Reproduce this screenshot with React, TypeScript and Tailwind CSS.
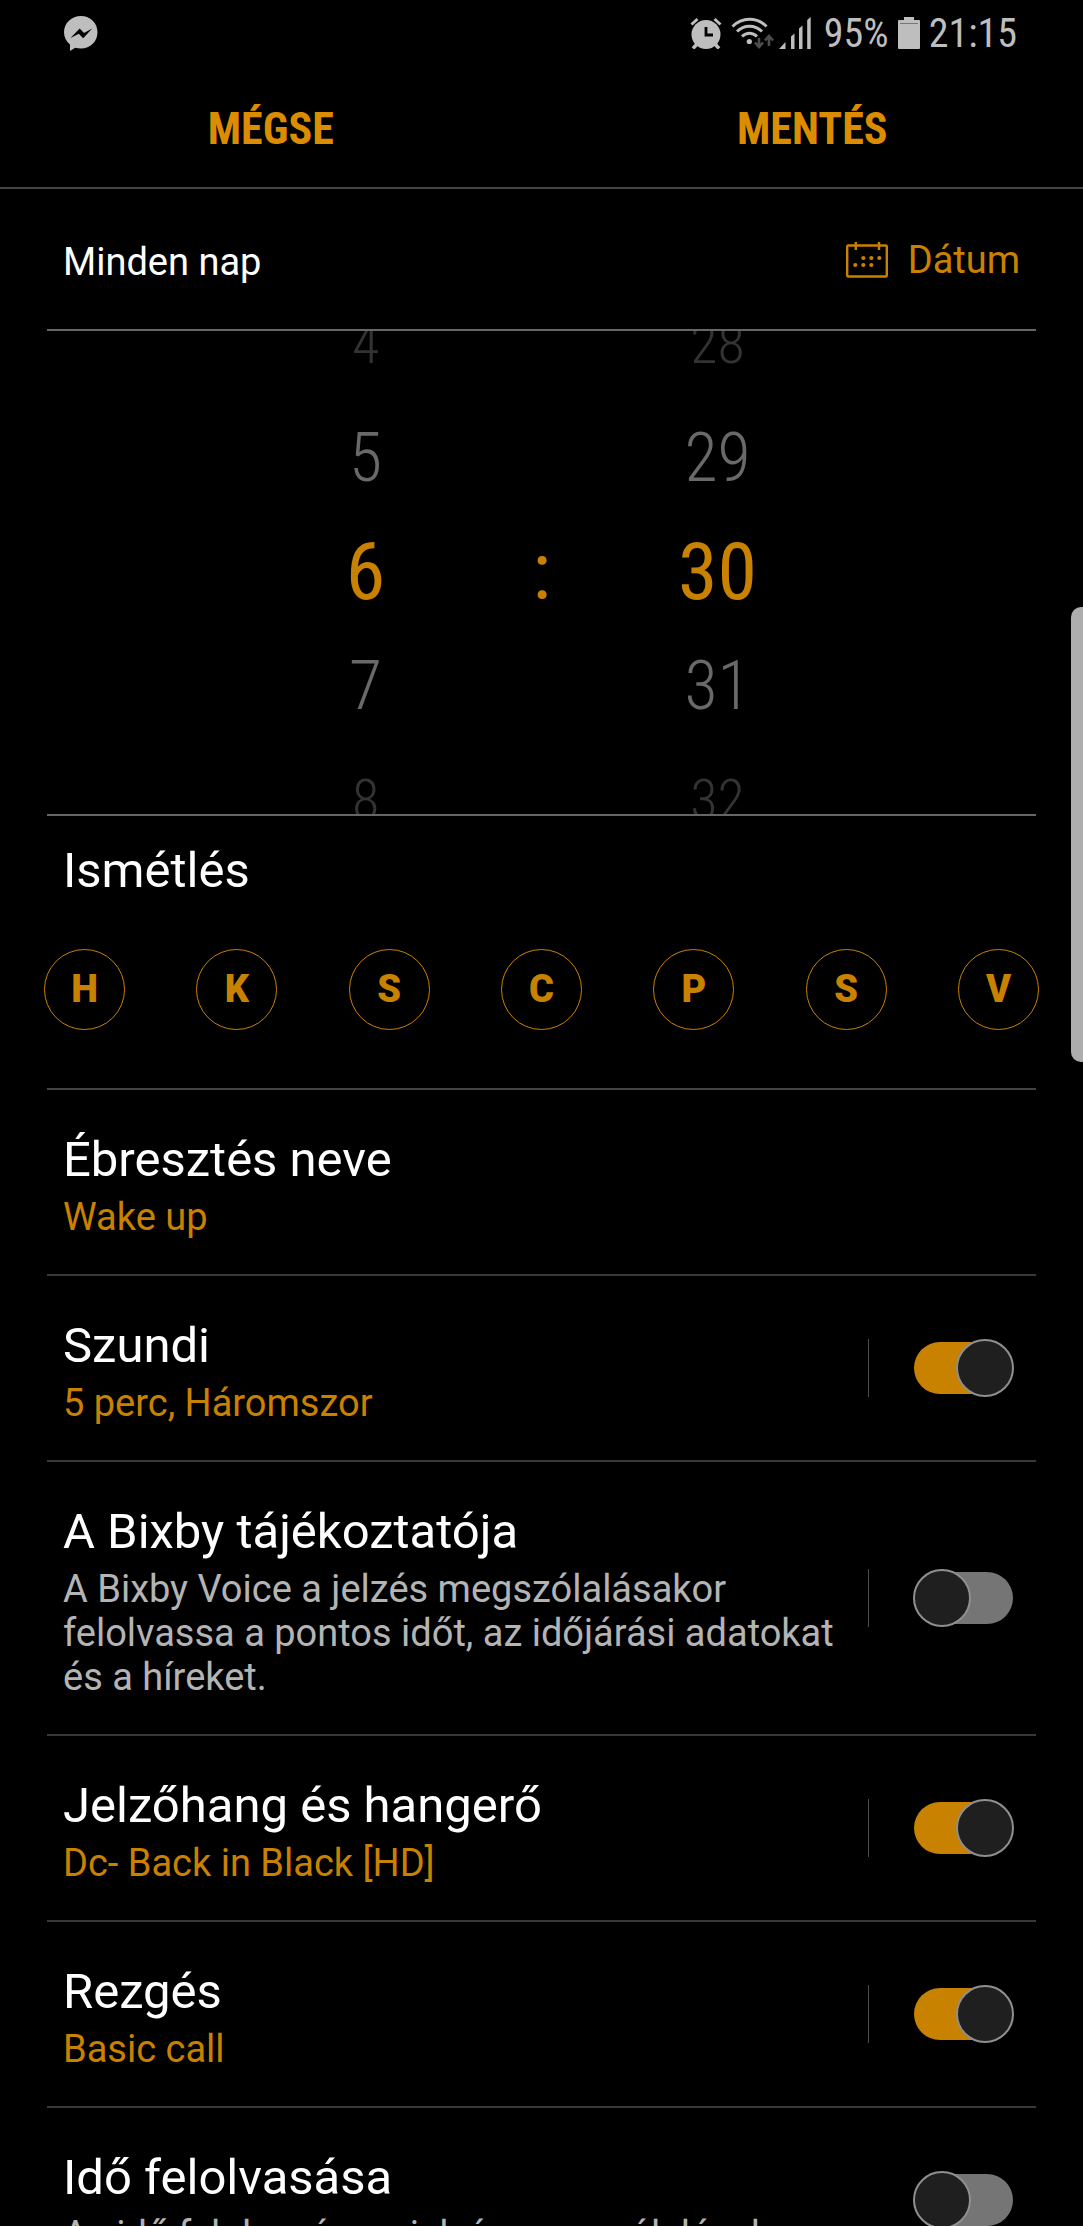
import { useState } from "react";
import clsx from "clsx";

const DAYS = [
  { letter: "H", name: "Hétfő" },
  { letter: "K", name: "Kedd" },
  { letter: "S", name: "Szerda" },
  { letter: "C", name: "Csütörtök" },
  { letter: "P", name: "Péntek" },
  { letter: "S", name: "Szombat" },
  { letter: "V", name: "Vasárnap" },
];

type Setting = {
  id: string;
  title: string;
  detail: string;
  muted?: boolean;
  toggle?: boolean;
  divided?: boolean;
  on?: boolean;
};

const SETTINGS: Setting[] = [
  { id: "name", title: "Ébresztés neve", detail: "Wake up" },
  { id: "snooze", title: "Szundi", detail: "5 perc, Háromszor", toggle: true, divided: true, on: true },
  {
    id: "bixby",
    title: "A Bixby tájékoztatója",
    detail: "A Bixby Voice a jelzés megszólalásakor felolvassa a pontos időt, az időjárási adatokat és a híreket.",
    muted: true,
    toggle: true,
    divided: true,
  },
  { id: "sound", title: "Jelzőhang és hangerő", detail: "Dc- Back in Black [HD]", toggle: true, divided: true, on: true },
  { id: "vibration", title: "Rezgés", detail: "Basic call", toggle: true, divided: true, on: true },
  { id: "read", title: "Idő felolvasása", detail: "Az idő felolvasása a jelzés megszólalásakor", muted: true, toggle: true },
];

function StatusBar() {
  return (
    <div className="flex h-[66px] items-center justify-between pl-16 pr-[66px] font-['Roboto_Condensed','Roboto',sans-serif] text-[40px] leading-none text-[#bebebe]">
      <svg className="h-[35px] w-[34px]" viewBox="0 0 34 35" fill="currentColor" aria-label="Messenger">
        <path
          fillRule="evenodd"
          d="M17 0C7.600 0 0 7.200 0 16.200c0 5 2.200 9.200 6 12.200v6.600l5.200-3.200c1.800.5 3.800.8 5.800.8 9.400 0 16.500-7.300 16.500-16.400S26.400 0 17 0ZM6.500 22l9.200-9.500 4.300 4.400 8.200-4.400-9 9.800-4.400-4.600Z"
        />
      </svg>
      <div className="flex items-center gap-[9px]">
        <svg className="h-8 w-8" viewBox="0 0 32 32" aria-label="Ébresztő">
          <circle cx="16" cy="17.500" r="14.500" fill="currentColor" />
          <path d="M1.500 7.500 7.500 2M30.500 7.500 24.500 2" stroke="currentColor" strokeWidth="3" fill="none" />
          <path d="m7 27-4 4.500M25 27l4 4.500" stroke="currentColor" strokeWidth="3.500" fill="none" />
          <path d="M16 10v8h7" stroke="#000" strokeWidth="2.800" fill="none" />
        </svg>
        <svg className="h-8 w-[43px]" viewBox="0 0 43 32" fill="none" aria-label="Wi-Fi">
          <g stroke="currentColor" strokeWidth="3">
            <path d="M1.500 9.500C11-.2 26-.2 35.500 9.500" />
            <path d="M6 14.500c7-7 18-7 25 0" />
            <path d="M11 19.500c4.500-4.200 10.500-4.200 15 0" />
          </g>
          <circle cx="18.300" cy="24.500" r="2.600" fill="currentColor" />
          <path d="M28 21v9m-4-4.500 4 4.500 4-4.500M38 29V19m-4 4.500 4-4.500 4 4.500" stroke="#4d4d4d" strokeWidth="2.600" />
        </svg>
        <svg className="-ml-1 h-8 w-8" viewBox="0 0 32 32" fill="currentColor" aria-label="Térerő">
          <path d="M0 32 6.500 25v7ZM12 19.500l3.500-3V32H12ZM20 11.500l3.500-3V32H20ZM28.200 3l3.500-3v32h-3.500Z" />
        </svg>
        <span className="ml-1 pt-[2px]">95%</span>
        <svg className="h-8 w-[22px]" viewBox="0 0 22 32" fill="currentColor" aria-label="Akkumulátor">
          <path d="M6 0h10v3h5a1 1 0 0 1 1 1v27a1 1 0 0 1-1 1H1a1 1 0 0 1-1-1V4a1 1 0 0 1 1-1h5Z" />
          <path d="M2 6h18v1H2Z" fill="#777" />
        </svg>
        <span className="pt-[2px]">21:15</span>
      </div>
    </div>
  );
}

function CalendarIcon() {
  return (
    <svg className="h-9 w-[42px]" viewBox="0 0 42 36" fill="none" stroke="currentColor" strokeWidth="2.400" aria-hidden="true">
      <rect x="1.200" y="3.500" width="39.600" height="31" rx="1" />
      <path d="M9.800 0v8M33 0v8" />
      <g fill="currentColor" stroke="none">
        <circle cx="17.300" cy="16" r="2.100" />
        <circle cx="25.300" cy="16" r="2.100" />
        <circle cx="33.300" cy="16" r="2.100" />
        <circle cx="9.300" cy="23" r="2.100" />
        <circle cx="17.300" cy="23" r="2.100" />
        <circle cx="25.300" cy="23" r="2.100" />
      </g>
    </svg>
  );
}

type WheelProps = { label: string; value: number; max: number; onChange: (value: number) => void };

function Wheel({ label, value, max, onChange }: WheelProps) {
  return (
    <div role="group" aria-label={label} className="flex w-44 shrink-0 flex-col">
      {[-2, -1, 0, 1, 2].map((offset) => {
        const n = (value + offset + max) % max;
        return (
          <button
            key={offset}
            onClick={() => onChange(n)}
            className={clsx(
              "h-[114px] shrink-0",
              offset === 0 && "text-[80px] leading-none text-[#c98100]",
              Math.abs(offset) === 1 && "text-[68px] leading-none font-light text-[#696969]",
              Math.abs(offset) === 2 && "text-[56px] leading-none font-light text-[#333]"
            )}
          >
            {n}
          </button>
        );
      })}
    </div>
  );
}

function Switch({ id, defaultOn }: { id: string; defaultOn: boolean }) {
  const [on, setOn] = useState(defaultOn);
  return (
    <input
      id={id}
      type="checkbox"
      role="switch"
      checked={on}
      onChange={(e) => setOn(e.target.checked)}
      className="relative h-[58px] w-[101px] shrink-0 appearance-none before:absolute before:inset-x-px before:inset-y-[3px] before:rounded-full before:bg-[#757575] after:absolute after:left-0 after:top-0 after:size-[58px] after:rounded-full after:border-2 after:border-[#8f8f8f] after:bg-[#1f1f1f] checked:before:bg-[#c98100] checked:after:left-auto checked:after:right-0"
    />
  );
}

function SettingRow({ setting }: { setting: Setting }) {
  return (
    <li className="mx-[47px] flex items-center border-b-2 border-[#383838] pl-4 pr-[22px]">
      <label htmlFor={setting.id} className="flex-1 pb-[35px] pt-[41px]">
        <span className="block text-[49px] leading-[58px] text-white">{setting.title}</span>
        <span className={clsx("mt-[6px] block text-[38px] leading-[44px]", setting.muted ? "text-[#b4b4b4]" : "text-[#c98100]")}>
          {setting.detail}
        </span>
      </label>
      {setting.toggle ? (
        <div className="ml-5 flex items-center">
          <div className={clsx("mr-11 h-[58px] w-px", setting.divided && "bg-[#4d4d4d]")} />
          <Switch id={setting.id} defaultOn={!!setting.on} />
        </div>
      ) : (
        <button id={setting.id} aria-label={setting.title} />
      )}
    </li>
  );
}

export default function App() {
  const [hour, setHour] = useState(6);
  const [minute, setMinute] = useState(30);
  const [days, setDays] = useState<number[]>([]);

  const toggleDay = (i: number) => {
    setDays((prev) => (prev.includes(i) ? prev.filter((d) => d !== i) : [...prev, i]));
  };

  return (
    <div className="relative h-screen overflow-hidden bg-black font-['Roboto',sans-serif] text-white">
      <StatusBar />

      <header className="grid h-[123px] grid-cols-2 border-b-2 border-[#444] pt-1 font-['Roboto_Condensed','Roboto',sans-serif] text-[44px] font-bold text-[#dc8c00]">
        <button>MÉGSE</button>
        <button>MENTÉS</button>
      </header>

      <main>
        <div className="mx-[47px] flex h-[142px] items-center justify-between border-b-2 border-[#666] px-4 pt-[2px] text-[38px]">
          <span className="pt-1">Minden nap</span>
          <button className="flex items-center gap-5 text-[#c98100]">
            <CalendarIcon />
            Dátum
          </button>
        </div>

        <section
          aria-label="Idő"
          className="mx-[47px] flex h-[485px] items-center justify-center overflow-hidden border-b-2 border-[#666] pb-[2px] font-['Roboto_Condensed','Roboto',sans-serif]"
        >
          <Wheel label="Óra" value={hour} max={24} onChange={setHour} />
          <span className="w-44 text-center text-[80px] leading-[114px] text-[#c98100]">:</span>
          <Wheel label="Perc" value={minute} max={60} onChange={setMinute} />
        </section>

        <section className="mx-[47px] h-[274px] border-b-2 border-[#444] pt-[26px]">
          <h2 className="pl-4 text-[49px] leading-[58px]">Ismétlés</h2>
          <div className="-mx-[3px] mt-[49px] flex justify-between">
            {DAYS.map((day, i) => (
              <button
                key={day.name}
                aria-label={day.name}
                aria-pressed={days.includes(i)}
                onClick={() => toggleDay(i)}
                className={clsx(
                  "size-[81px] rounded-full border border-[#c98100] text-[38px] font-black",
                  days.includes(i) ? "bg-[#c98100] text-black" : "text-[#c98100]"
                )}
              >
                {day.letter}
              </button>
            ))}
          </div>
        </section>

        <ul>
          {SETTINGS.map((setting) => (
            <SettingRow key={setting.id} setting={setting} />
          ))}
        </ul>
      </main>

      {/* edge panel handle */}
      <div className="absolute right-0 top-[607px] h-[455px] w-3 rounded-l-[10px] bg-[#adadad]" />
    </div>
  );
}
